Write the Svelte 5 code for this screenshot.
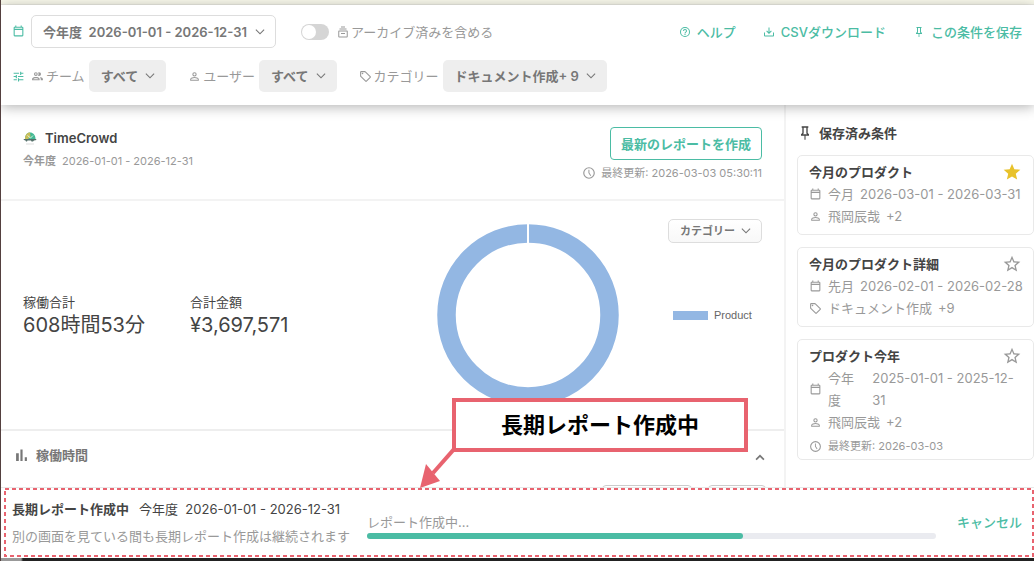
<script>
	let includeArchived = false;
	let progress = 66;

	const icons = {
		calendar: "M19 3h-1V1h-2v2H8V1H6v2H5c-1.1 0-2 .9-2 2v14a2 2 0 0 0 2 2h14a2 2 0 0 0 2-2V5a2 2 0 0 0-2-2m0 16H5V9h14zM5 7V5h14v2z",
		tune: "M3 17v2h6v-2zM3 5v2h10V5zm10 16v-2h8v-2h-8v-2h-2v6zM7 9v2H3v2h4v2h2V9zm14 4v-2H11v2zm-6-4h2V7h4V5h-4V3h-2z",
		user: "M12 5.9a2.1 2.1 0 1 1 0 4.2 2.1 2.1 0 0 1 0-4.2m0 9c2.97 0 6.1 1.46 6.1 2.1v1.1H5.9V17c0-.64 3.13-2.1 6.1-2.1M12 4a4 4 0 1 0 0 8 4 4 0 0 0 0-8m0 9c-2.67 0-8 1.34-8 4v3h16v-3c0-2.66-5.33-4-8-4",
		users: "M13.07 10.41a5 5 0 0 0 0-5.82A3.4 3.4 0 0 1 15 4a3.5 3.5 0 0 1 0 7 3.4 3.4 0 0 1-1.93-.59M5.5 7.5A3.5 3.5 0 1 1 9 11a3.5 3.5 0 0 1-3.5-3.5m2 0A1.5 1.5 0 1 0 9 6a1.5 1.5 0 0 0-1.5 1.5M16 17v2H2v-2s0-4 7-4 7 4 7 4m-2 0c-.14-.78-1.33-2-5-2s-4.93 1.31-5 2m11.95-4A5.32 5.32 0 0 1 18 17v2h4v-2s0-3.63-6.06-4z",
		pin: "M16 12V4h1V2H7v2h1v8l-2 2v2h5.2v6h1.6v-6H18v-2zm-7.2 2 1.2-1.2V4h4v8.8l1.2 1.2z",
		download: "M2 13h2v6h16v-6h2v6c0 1.1-.9 2-2 2H4a2 2 0 0 1-2-2zm10 3 5.5-5.5-1.4-1.4-3.1 3.1V3h-2v9.2L7.9 9.1 6.5 10.5z",
		help: "M11 18h2v-2h-2zm1-16a10 10 0 1 0 0 20 10 10 0 0 0 0-20m0 18a8 8 0 1 1 0-16 8 8 0 0 1 0 16m0-14a4 4 0 0 0-4 4h2a2 2 0 1 1 4 0c0 2-3 1.75-3 5h2c0-2.25 3-2.5 3-5a4 4 0 0 0-4-4",
		clock: "M12 20a8 8 0 1 0 0-16 8 8 0 0 0 0 16m0-18a10 10 0 1 1 0 20 10 10 0 0 1 0-20m.7 4.5v5.2l3 4.6-1.4.9L11 12.2V6.5z",
		tag: "M21.41 11.58l-9-9A2 2 0 0 0 11 2H4a2 2 0 0 0-2 2v7a2 2 0 0 0 .59 1.42l9 9A2 2 0 0 0 13 22a2 2 0 0 0 1.41-.59l7-7A2 2 0 0 0 22 13a2 2 0 0 0-.59-1.42M13 20l-9-9V4h7l9 9zM6.5 5a1.5 1.5 0 1 1 0 3 1.5 1.5 0 0 1 0-3",
		star: "M12 17.27 18.18 21l-1.64-7.03L22 9.24l-7.19-.61L12 2 9.19 8.63 2 9.24l5.45 4.73L5.82 21z",
		starOutline: "M12 15.39l-3.76 2.27.99-4.28-3.32-2.88 4.38-.37L12 6.09l1.71 4.04 4.38.37-3.32 2.88.99 4.28M22 9.24l-7.19-.61L12 2 9.19 8.63 2 9.24l5.45 4.73L5.82 21 12 17.27 18.18 21l-1.64-7.03z",
		archive: "M8 1h8v2H8zM5 5h14v2H5zM4 9h16a1.5 1.5 0 0 1 1.5 1.5V21a2 2 0 0 1-2 2h-15a2 2 0 0 1-2-2V10.500A1.5 1.5 0 0 1 4 9m.5 2v10h15V11zM8 14h8v2H8z",
		chart: "M2 8h5v14H2zM10 1h4v21h-4zM18 15h4v7h-4z",
		down: "M3 8l1.500-1.500L12 14l7.500-7.500L21 8l-9 9z",
		up: "M3 16l2.400 2.400L12 11.800l6.600 6.600L21 16l-9-9z",
	};

	const filters = [
		{ id: "team", icon: "users", label: "チーム", value: "すべて" },
		{ id: "user", icon: "user", label: "ユーザー", value: "すべて" },
		{ id: "category", icon: "tag", label: "カテゴリー", value: "ドキュメント作成+ 9" },
	];

	const actions = [
		{ icon: "help", label: "ヘルプ" },
		{ icon: "download", label: "CSVダウンロード" },
		{ icon: "pin", label: "この条件を保存" },
	];

	let saved = [
		{
			title: "今月のプロダクト",
			starred: true,
			rows: [
				{ icon: "calendar", parts: ["今月", "2026-03-01 - 2026-03-31"] },
				{ icon: "user", parts: ["飛岡辰哉", "+2"] },
			],
		},
		{
			title: "今月のプロダクト詳細",
			starred: false,
			rows: [
				{ icon: "calendar", parts: ["先月", "2026-02-01 - 2026-02-28"] },
				{ icon: "tag", parts: ["ドキュメント作成", "+9"] },
			],
		},
		{
			title: "プロダクト今年",
			starred: false,
			updated: "最終更新: 2026-03-03",
			rows: [
				{ icon: "calendar", parts: ["今年度", "2025-01-01 - 2025-12-31"] },
				{ icon: "user", parts: ["飛岡辰哉", "+2"] },
			],
		},
	];

	function toggleStar(item) {
		item.starred = !item.starred;
		saved = saved;
	}
</script>

{#snippet icon(name, size)}
	<svg class="icon" width={size} height={size} viewBox="0 0 24 24" aria-hidden="true">
		<path d={icons[name]} />
	</svg>
{/snippet}

<div class="app">
	<div class="top-strip"></div>

	<header>
		<div class="row">
			<span class="accent">{@render icon("calendar", 13)}</span>
			<span class="select outlined">
				<select aria-label="期間">
					<option>今年度&nbsp; 2026-01-01 - 2026-12-31</option>
				</select>
				{@render icon("down", 12)}
			</span>
			<label class="archive">
				<input type="checkbox" role="switch" bind:checked={includeArchived} />
				<span class="with-icon">{@render icon("archive", 12)}アーカイブ済みを含める</span>
			</label>
			<nav>
				{#each actions as action}
					<button class="link">{@render icon(action.icon, 12)}{action.label}</button>
				{/each}
			</nav>
		</div>
		<div class="row">
			<span class="accent">{@render icon("tune", 13)}</span>
			<div class="filters">
				{#each filters as filter}
					<div class="filter">
						<label class="with-icon" for={filter.id}>{@render icon(filter.icon, 13)}{filter.label}</label>
						<span class="select filled">
							<select id={filter.id}>
								<option>{filter.value}</option>
							</select>
							{@render icon("down", 12)}
						</span>
					</div>
				{/each}
			</div>
		</div>
	</header>

	<div class="body">
		<main>
			<section class="report-head">
				<div>
					<h1>
						<svg width="14" height="14" viewBox="0 0 28 28" aria-hidden="true">
							<path d="M4 16C4 8 8 3 14 3s11 5 11 13z" fill="#43b996" />
							<path d="M4 16C4 8 8 3 14 3l1 8-5 5z" fill="#c9bd58" />
							<path d="M9 9l6 5 5-5" stroke="#d8f3df" stroke-width="2" fill="none" />
							<path d="M1 16h25l1 2-5 1-2 2h-3l-1-2h-7l-1 2H6l-1-2-3-1z" fill="#55706a" />
							<path d="M6 26h16" stroke="#ddd" stroke-width="2" />
						</svg>
						TimeCrowd
					</h1>
					<p class="period"><b>今年度</b>2026-01-01 - 2026-12-31</p>
				</div>
				<div class="report-actions">
					<button class="create">最新のレポートを作成</button>
					<p class="updated">{@render icon("clock", 14)}最終更新: 2026-03-03 05:30:11</p>
				</div>
			</section>

			<section class="summary">
				<dl>
					<div>
						<dt>稼働合計</dt>
						<dd>608時間53分</dd>
					</div>
					<div>
						<dt>合計金額</dt>
						<dd>¥3,697,571</dd>
					</div>
				</dl>
				<svg class="donut" width="182" height="182" viewBox="0 0 182 182" role="img" aria-label="Product">
					<circle cx="91" cy="91" r="81.5" fill="none" stroke="#93b7e3" stroke-width="18.5" />
					<path d="M91 0v20" stroke="#fff" stroke-width="2" />
				</svg>
				<div class="chart-side">
					<span class="select small">
						<select aria-label="集計単位">
							<option>カテゴリー</option>
						</select>
						{@render icon("down", 12)}
					</span>
					<div class="legend"><i></i>Product</div>
				</div>
			</section>

			<section class="hours">
				<div class="hours-head">
					<h2>{@render icon("chart", 13)}稼働時間</h2>
					<button class="collapse" aria-label="閉じる">{@render icon("up", 12)}</button>
				</div>
				<div class="hours-tools">
					<button class="tool wide" aria-label="表示単位"></button>
					<button class="tool" aria-label="表示形式"></button>
				</div>
			</section>
		</main>

		<aside>
			<h2>{@render icon("pin", 16)}保存済み条件</h2>
			{#each saved as item}
				<article>
					<div class="card-title">
						<h3>{item.title}</h3>
						<button class="star" class:on={item.starred} aria-label="お気に入り" on:click={() => toggleStar(item)}>
							{@render icon(item.starred ? "star" : "starOutline", 20)}
						</button>
					</div>
					{#each item.rows as row}
						<div class="card-row">
							{@render icon(row.icon, 13)}
							{#each row.parts as part}
								<span>{part}</span>
							{/each}
						</div>
					{/each}
					{#if item.updated}
						<div class="card-row minor">{@render icon("clock", 13)}<span>{item.updated}</span></div>
					{/if}
				</article>
			{/each}
		</aside>
	</div>

	<footer>
		<div class="job">
			<p class="job-title"><b>長期レポート作成中</b><span>今年度&nbsp; 2026-01-01 - 2026-12-31</span></p>
			<p class="muted">別の画面を見ている間も長期レポート作成は継続されます</p>
		</div>
		<div class="progress">
			<label for="job-progress">レポート作成中...</label>
			<progress id="job-progress" max="100" value={progress}></progress>
		</div>
		<button class="link cancel">キャンセル</button>

		<svg class="outline" aria-hidden="true">
			<rect width="100%" height="100%" />
		</svg>
		<div class="callout">
			長期レポート作成中
			<svg class="arrow" width="36" height="42" viewBox="0 0 36 42" aria-hidden="true">
				<path d="M35 1 13 26" stroke="#e8636f" stroke-width="4" />
				<path d="M0 41 6 17 20 34z" fill="#e8636f" />
			</svg>
		</div>
	</footer>
	<div class="bottom-strip"></div>
</div>

<style>
	:global(body) {
		margin: 0;
		background: #fff;
	}

	.app {
		display: flex;
		flex-direction: column;
		height: 100vh;
		overflow: hidden;
		box-sizing: border-box;
		border-left: 1px solid #54403f;
		font-family: Inter, "Noto Sans CJK JP", sans-serif;
		font-size: 13px;
		line-height: 22px;
		color: #444;
	}

	.app :global(*) {
		box-sizing: border-box;
	}

	h1,
	h2,
	h3,
	p,
	dl,
	dd {
		margin: 0;
	}

	button,
	select {
		font: inherit;
		color: inherit;
	}

	button {
		padding: 0;
		border: none;
		background: none;
		cursor: pointer;
	}

	.icon {
		flex: none;
		fill: currentColor;
	}

	.top-strip {
		flex: none;
		height: 5px;
		background: #f9f9ec;
		border-bottom: 1px solid #ecece4;
	}

	header {
		position: relative;
		z-index: 1;
		flex: none;
		display: flex;
		flex-direction: column;
		gap: 12px;
		padding: 10px 12px 13px 11px;
		background: #fff;
		box-shadow: 0 2px 12px rgba(0, 0, 0, 0.3);
	}

	.row {
		display: flex;
		align-items: center;
		gap: 6px;
		color: #999;
	}

	.accent {
		display: flex;
		color: #4bbca4;
	}

	.select {
		position: relative;
		display: inline-flex;
		align-items: center;
		border-radius: 5px;
		color: #777;
		font-weight: 600;
	}

	.select select {
		field-sizing: content;
		appearance: none;
		height: 32px;
		padding: 0 28px 0 12px;
		border: none;
		border-radius: 5px;
		background: transparent;
		cursor: pointer;
	}

	.select .icon {
		position: absolute;
		right: 10px;
		pointer-events: none;
	}

	.outlined select {
		height: 33px;
		border: 1px solid #ddd;
		padding-left: 11px;
	}

	.filled {
		background: #eee;
	}

	.small {
		font-size: 11px;
	}

	.small select {
		height: 24px;
		padding: 0 26px 0 11px;
		border: 1px solid #ddd;
		background: linear-gradient(#fff, #f8f8f8);
	}

	.archive {
		display: flex;
		align-items: center;
		gap: 8px;
		margin-left: 19px;
	}

	.archive input {
		appearance: none;
		width: 28px;
		height: 16px;
		margin: 0;
		padding: 1px;
		border-radius: 8px;
		background: #d5d5d5;
	}

	.archive input::before {
		content: "";
		display: block;
		width: 14px;
		height: 14px;
		border-radius: 50%;
		background: #fff;
	}

	.archive input:checked {
		padding-left: 13px;
		background: #4bbca4;
	}

	.with-icon {
		display: flex;
		align-items: center;
		gap: 2px;
	}

	nav {
		display: flex;
		gap: 27px;
		margin-left: auto;
	}

	.link {
		display: flex;
		align-items: center;
		gap: 6px;
		color: #4bbca4;
		font-weight: 500;
	}

	.filters {
		display: flex;
		gap: 22px;
	}

	.filter {
		display: flex;
		align-items: center;
		gap: 4px;
	}

	.body {
		flex: 1;
		min-height: 0;
		display: grid;
		grid-template-columns: minmax(0, 1fr) 248px;
		overflow: hidden;
	}

	main {
		border-right: 2px solid #f3f3f3;
	}

	.report-head {
		display: flex;
		justify-content: space-between;
		padding: 22px 22px 15px 22px;
		border-bottom: 2px solid #f3f3f3;
	}

	h1 {
		display: flex;
		align-items: center;
		gap: 8px;
		font-size: 13px;
		font-weight: 600;
	}

	.period {
		display: flex;
		gap: 6px;
		margin-top: 1px;
		font-size: 11px;
		color: #999;
	}

	.report-actions {
		display: flex;
		flex-direction: column;
		align-items: flex-end;
		gap: 2px;
	}

	.create {
		height: 33px;
		padding: 0 10px;
		border: 1px solid #4bbca4;
		border-radius: 4px;
		color: #4bbca4;
		font-weight: 600;
	}

	.updated {
		display: flex;
		align-items: center;
		gap: 5px;
		font-size: 11px;
		color: #999;
	}

	.summary {
		display: grid;
		grid-template-columns: 414px 1fr auto;
		padding: 18px 22px 0 22px;
		height: 230px;
		border-bottom: 2px solid #eee;
	}

	dl {
		display: flex;
		align-self: start;
		margin-top: 72px;
	}

	dl > div {
		width: 167px;
	}

	dd {
		font-size: 20px;
		line-height: 24px;
	}

	.donut {
		margin-top: 5px;
	}

	.chart-side {
		display: flex;
		flex-direction: column;
		gap: 61px;
	}

	.legend {
		display: flex;
		align-items: center;
		gap: 6px;
		padding-left: 5px;
		font-family: "Liberation Sans", sans-serif;
		font-size: 11px;
		color: #666;
	}

	.legend i {
		width: 35px;
		height: 9px;
		background: #93b7e3;
	}

	.hours-head {
		display: flex;
		justify-content: space-between;
		align-items: center;
		padding: 13px 18px 0 14px;
	}

	h2 {
		display: flex;
		align-items: center;
		gap: 8px;
		font-size: 13px;
		font-weight: 600;
	}

	.hours h2 {
		color: #777;
	}

	.collapse {
		display: flex;
		padding-top: 4px;
		color: #777;
	}

	.hours-tools {
		display: flex;
		justify-content: flex-end;
		gap: 16px;
		padding: 19px 18px 0 0;
	}

	.tool {
		width: 58px;
		height: 24px;
		border: 1px solid #ccc;
		border-radius: 4px;
	}

	.tool.wide {
		width: 90px;
	}

	aside {
		display: flex;
		flex-direction: column;
		gap: 12px;
		padding: 17px 0 0 11px;
	}

	aside h2 {
		margin-bottom: -1px;
		gap: 6px;
	}

	article {
		padding: 5px 9px 7px 11px;
		border: 1px solid #e9e9e9;
		border-radius: 5px;
	}

	.card-title {
		display: flex;
		align-items: center;
		justify-content: space-between;
		padding-right: 2px;
	}

	h3 {
		font-size: 13px;
		font-weight: 600;
	}

	.star {
		display: flex;
		color: #999;
	}

	.star.on {
		color: #e8c22b;
	}

	.card-row {
		display: flex;
		align-items: center;
		gap: 6px;
		color: #999;
	}

	.minor {
		margin-top: 2px;
		margin-bottom: -5px;
		font-size: 11px;
	}

	footer {
		position: relative;
		z-index: 2;
		flex: none;
		display: grid;
		grid-template-columns: auto 1fr auto;
		align-items: center;
		gap: 17px;
		height: 71px;
		padding: 0 12px 2px 11px;
		background: #fff;
		border-top: 1px solid #e8e8e8;
	}

	.job {
		display: flex;
		flex-direction: column;
		gap: 5px;
	}

	.job-title {
		display: flex;
		gap: 10px;
	}

	b {
		font-weight: 600;
	}

	.muted {
		color: #999;
	}

	.progress {
		display: flex;
		flex-direction: column;
		padding: 6px 4px 0 0;
		color: #999;
	}

	progress {
		appearance: none;
		width: 100%;
		height: 6px;
		border: none;
	}

	progress::-webkit-progress-bar {
		border-radius: 3px;
		background: #eaebf0;
	}

	progress::-webkit-progress-value {
		border-radius: 3px;
		background: #4bbca4;
	}

	.outline {
		position: absolute;
		top: 1px;
		left: 4px;
		width: calc(100% - 5px);
		height: 67px;
		overflow: visible;
		pointer-events: none;
	}

	.outline rect {
		fill: none;
		stroke: #e8636f;
		stroke-width: 2;
		stroke-dasharray: 4 3;
	}

	.callout {
		position: absolute;
		left: 451px;
		bottom: 106px;
		width: 296px;
		height: 54px;
		border: 4px solid #e8636f;
		background: #fff;
		color: #000;
		font-size: 22px;
		font-weight: 700;
		line-height: 46px;
		text-align: center;
	}

	.arrow {
		position: absolute;
		right: 100%;
		top: 100%;
		margin-top: -1px;
	}

	.bottom-strip {
		flex: none;
		height: 3px;
		background: linear-gradient(90deg, #999 20px, #222 22px);
	}
</style>
